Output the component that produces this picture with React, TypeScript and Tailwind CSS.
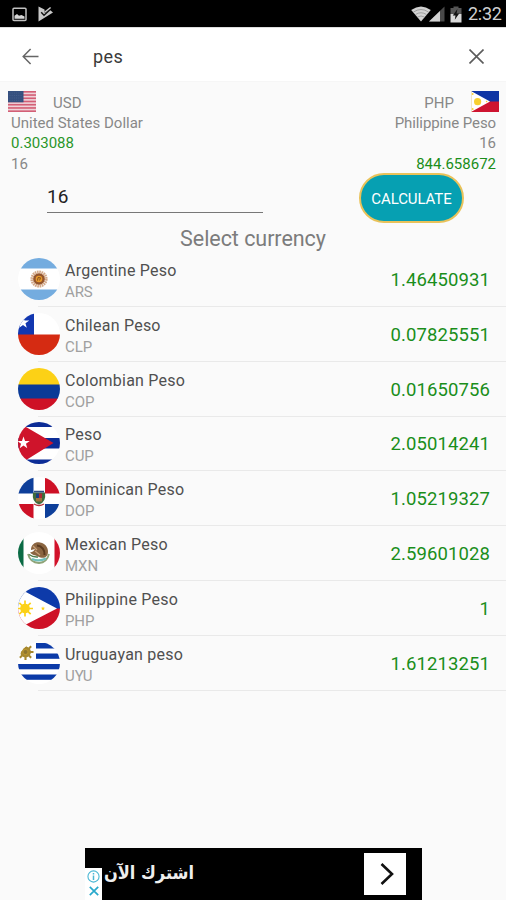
import type { ReactNode } from 'react';

interface Currency {
  code: string;
  name: string;
  rate: string;
  flag: ReactNode;
}

const RAYS = [0, 45, 90, 135, 180, 225, 270, 315];
const STAR = "M0,-5 L1.2,-1.6 L4.8,-1.5 L1.9,0.6 L2.9,4 L0,2 L-2.9,4 L-1.9,0.6 L-4.8,-1.5 L-1.2,-1.6 Z";

// Round flags, all drawn on a 42x42 box and clipped by FlagCircle
const CURRENCIES: Currency[] = [
  {
    code: "ARS",
    name: "Argentine Peso",
    rate: "1.46450931",
    flag: (
      <>
        <rect width="42" height="42" fill="#fff" />
        <rect width="42" height="10.5" fill="#74acdf" />
        <rect y="31.5" width="42" height="11" fill="#74acdf" />
        <g transform="translate(21 21)">
          <circle r="7" fill="none" stroke="#d3a888" strokeWidth="3.2" strokeDasharray="1.6 0.6" />
          <circle r="5.8" fill="#94552c" />
          <circle r="3.3" fill="#e89a2c" />
          <path d="M-1.5,1.6 L-1,-1.4 L1.5,-1.2 L0.6,1.4" fill="none" stroke="#70401c" strokeWidth="0.8" />
        </g>
      </>
    )
  },
  {
    code: "CLP",
    name: "Chilean Peso",
    rate: "0.07825551",
    flag: (
      <>
        <rect width="42" height="42" fill="#fff" />
        <rect width="16" height="22" fill="#1237b0" />
        <rect y="21.5" width="42" height="21" fill="#d52b12" />
        <path d={STAR} transform="translate(5 9.5) scale(1.3)" fill="#fff" />
      </>
    )
  },
  {
    code: "COP",
    name: "Colombian Peso",
    rate: "0.01650756",
    flag: (
      <>
        <rect width="42" height="17" fill="#fcd116" />
        <rect y="16.5" width="42" height="14.5" fill="#0a3a97" />
        <rect y="30.5" width="42" height="12" fill="#ce1126" />
      </>
    )
  },
  {
    code: "CUP",
    name: "Peso",
    rate: "2.05014241",
    flag: (
      <>
        <rect width="42" height="42" fill="#fff" />
        <rect width="42" height="5" fill="#0c2c96" />
        <rect y="16" width="42" height="10.5" fill="#0c2c96" />
        <rect y="37.5" width="42" height="5" fill="#0c2c96" />
        <path d="M0,0 L8,5 L35.5,21 L9,37.5 L0,42 Z" fill="#cf142b" />
        <path d={STAR} transform="translate(5.5 21) scale(1.3)" fill="#fff" />
      </>
    )
  },
  {
    code: "DOP",
    name: "Dominican Peso",
    rate: "1.05219327",
    flag: (
      <>
        <rect width="42" height="42" fill="#fff" />
        <rect width="15.5" height="16.5" fill="#0e3f9a" />
        <rect x="27" width="15" height="16.5" fill="#ce1126" />
        <rect y="27" width="15.5" height="15" fill="#ce1126" />
        <rect x="27" y="27" width="15" height="15" fill="#0e3f9a" />
        <path d="M15,15.5 Q13.5,25 21,27.5 Q28.5,25 27,15.5 Z" fill="#3f6b3c" />
        <rect x="18" y="16.5" width="3" height="4.5" fill="#173f80" />
        <rect x="21" y="16.5" width="3" height="4.5" fill="#b02a34" />
        <rect x="18" y="21" width="6" height="3.5" fill="#a0713c" />
        <path d="M16,13.8 H26 V15.4 H16 Z" fill="#2f4f84" />
        <path d="M16,27 Q21,30 26,27" fill="none" stroke="#b8353f" strokeWidth="1.3" />
      </>
    )
  },
  {
    code: "MXN",
    name: "Mexican Peso",
    rate: "2.59601028",
    flag: (
      <>
        <rect width="42" height="42" fill="#fff" />
        <rect width="5.5" height="42" fill="#0b6b45" />
        <rect x="36.5" width="6" height="42" fill="#d2132b" />
        <path d="M10,22 Q12,30.5 21,31 Q29,30.5 31,22" fill="none" stroke="#8fa478" strokeWidth="1.8" />
        <path d="M14,27 Q21,30 28,26.5" fill="none" stroke="#6fc0bb" strokeWidth="2.2" />
        <path d="M13,18 C13,12 18,9.5 22,10.5 C28,11.5 31.5,17 29.5,23 C27,27 23,26 20,24.5 C17,23 14,23 12,20.5 C15,20 16,19 17,17 Z" fill="#8a6541" />
        <path d="M19,13.5 C24,14 27,18 26.5,23" fill="none" stroke="#5a3b20" strokeWidth="2" />
        <path d="M15,14 L19,18 M17,19 L22,23" stroke="#c9a078" strokeWidth="1.3" />
        <path d="M11,22.5 Q15,25.5 20,25" fill="none" stroke="#4f7d4d" strokeWidth="1.4" />
      </>
    )
  },
  {
    code: "PHP",
    name: "Philippine Peso",
    rate: "1",
    flag: (
      <>
        <rect width="42" height="22" fill="#0d3aa9" />
        <rect y="21.5" width="42" height="21" fill="#ce1126" />
        <path d="M0,0 L6,4 L39,21.5 L7,38 L0,42 Z" fill="#fff" />
        <g transform="translate(7 21.5)" fill="#fcd116" stroke="#fcd116" strokeWidth="1.7">
          <circle r="4" />
          {RAYS.map(a => (
            <path key={a} d="M0,-3 V-8" transform={`rotate(${a})`} />
          ))}
        </g>
        <path d={STAR} transform="translate(25 21.5) scale(0.45)" fill="#fcd116" />
      </>
    )
  },
  {
    code: "UYU",
    name: "Uruguayan peso",
    rate: "1.61213251",
    flag: (
      <>
        <rect width="42" height="42" fill="#fff" />
        <rect x="18" y="1" width="24" height="5.5" fill="#0b3aa8" />
        <rect x="18" y="11.5" width="24" height="5.3" fill="#0b3aa8" />
        <rect y="22" width="42" height="5.3" fill="#0b3aa8" />
        <rect y="32.5" width="42" height="5.3" fill="#0b3aa8" />
        <g transform="translate(7.5 10)" stroke="#a8892e" strokeWidth="2.1" fill="#b8942e">
          <circle r="4.4" />
          {RAYS.map(a => (
            <path key={a} d="M0,-3 V-8" transform={`rotate(${a})`} />
          ))}
        </g>
        <circle cx="7.5" cy="10" r="2" fill="#8d752d" />
      </>
    )
  }
];

function FlagCircle({ children }: { children: ReactNode }) {
  return (
    <svg viewBox="0 0 42 42" className="size-[42px] rounded-full shrink-0">
      {children}
    </svg>
  );
}

function StatusBar() {
  return (
    <div className="h-[27px] shrink-0 bg-black flex items-center justify-between pl-3 pr-[5px]">
      <div className="flex items-center gap-[11px] mt-[1px]">
        <svg viewBox="0 0 15 15" className="w-[15px] h-[15px]">
          <rect x="1" y="1.2" width="13" height="12.4" rx="1" fill="none" stroke="#c0c0c0" strokeWidth="1.5" />
          <path d="M2.5,11.8 V8.8 L5,7 L7,8.8 L9.5,8 L12.5,9.5 V11.8 Z" fill="#d6d6d6" />
        </svg>
        <svg viewBox="0 0 15 16" className="w-[15px] h-[16px]">
          <path d="M0.5,0.5 L6.5,3.6 L6.8,7 L12,4 L15,6.5 L0.5,15.5 Z" fill="#c8c8c8" />
          <path d="M3.2,6.2 L6,9.2 L12,3.8" fill="none" stroke="#111" strokeWidth="1.4" />
          <path d="M7,6 L12.6,1.5" fill="none" stroke="#c8c8c8" strokeWidth="1.6" />
        </svg>
      </div>
      <div className="flex items-center mt-[1px]">
        <svg viewBox="0 0 20 16" className="w-[20px] h-[16px]">
          <path d="M0.2,4 Q10,-3 19.8,4 L10,15.5 Z" fill="#d2d2d2" />
          <path d="M2.5,6 Q10,1 17.5,6 M4.5,8.5 Q10,5 15.5,8.5 M6.5,11 Q10,9 13.5,11" fill="none" stroke="#888" strokeWidth="0.7" />
        </svg>
        <svg viewBox="0 0 16 16" className="w-[16px] h-[16px] -ml-[2px]">
          <path d="M0,15.5 L15.5,0.5 V15.5 Z" fill="#4a4a4a" />
          <path d="M0,15.5 L11,4.9 V15.5 Z" fill="#d2d2d2" />
        </svg>
        <svg viewBox="0 0 12 17" className="w-[12px] h-[17px] ml-[5px]">
          <path d="M3.5,0.5 H8.5 V2 H11.5 V8 H0.5 V2 H3.5 Z" fill="#555" />
          <rect x="0.5" y="8" width="11" height="8.5" fill="#d8d8d8" />
          <path d="M7.4,3 L2.8,9.4 H5.5 L4.8,13.8 L9.2,7.4 H6.6 Z" fill="#111" />
        </svg>
        <span className="text-[18px] leading-[20px] text-[#d0d0d0] ml-[6px] w-[33px] tracking-[-0.3px]">2:32</span>
      </div>
    </div>
  );
}

function SearchBar() {
  return (
    <div className="h-[55px] shrink-0 bg-white border-t border-[#dedede] border-b border-b-[#f6f6f6] flex items-center px-[22px]">
      <svg viewBox="0 0 17 17" className="w-[17px] h-[17px] mt-[4px]" fill="none" stroke="#666" strokeWidth="1.5">
        <path d="M16.5,8.5 H1.5 M8.6,1 L1.2,8.5 L8.6,16" />
      </svg>
      <span className="text-[18px] leading-[22px] text-[#3a3a3a] ml-[54px] mt-[4px] grow tracking-[0.4px]">pes</span>
      <svg viewBox="0 0 15 15" className="w-[15px] h-[15px] mt-[4px]" fill="none" stroke="#5c5c5c" strokeWidth="1.6">
        <path d="M0.5,0.5 L14.5,14.5 M14.5,0.5 L0.5,14.5" />
      </svg>
    </div>
  );
}

function UsFlag() {
  return (
    <svg viewBox="0 0 28 21" className="w-[28px] h-[21px]">
      <rect width="28" height="21" fill="#efd3d9" />
      {[0, 2, 4, 6, 8, 10, 12].map(i => (
        <rect key={i} y={i * 1.615} width="28" height="1.615" fill="#d35f76" />
      ))}
      <rect width="15.5" height="11.3" fill="#35507f" />
      <path d="M1.5,2 H14.5 M1.5,4.5 H14.5 M1.5,7 H14.5 M1.5,9.4 H14.5" stroke="#4d6690" strokeWidth="0.7" strokeDasharray="1 1.2" />
    </svg>
  );
}

function PhFlag() {
  return (
    <svg viewBox="0 0 28 21" className="w-[28px] h-[21px]">
      <rect width="28" height="11" fill="#0f35a4" />
      <rect y="10.5" width="28" height="10.5" fill="#ce1430" />
      <path d="M0,0 L19,10.5 L0,21 Z" fill="#fff" />
      <circle cx="6.6" cy="10.7" r="3.6" fill="#f8d030" />
      <path d="M0,0 V21" stroke="#e9dcae" strokeWidth="1.4" />
      <circle cx="1.7" cy="3" r="0.9" fill="#f8d030" />
      <circle cx="1.7" cy="18" r="0.9" fill="#f8d030" />
      <circle cx="15.6" cy="10.5" r="0.8" fill="#f8d030" />
    </svg>
  );
}

function CurrencyRow({ currency }: { currency: Currency }) {
  return (
    <div className="h-[54.85px] flex flex-col">
      <div className="grow flex items-center pl-[17.5px] pr-4">
        <FlagCircle>{currency.flag}</FlagCircle>
        <div className="ml-[5.5px] pt-[4px] grow flex flex-col">
          <span className="text-[16px] leading-[22px] tracking-[0.24px] text-[#505050]">{currency.name}</span>
          <span className="text-[15px] leading-[20px] tracking-[-0.1px] text-[#a0a0a0]">{currency.code}</span>
        </div>
        <span className="text-[18.5px] leading-[22px] tracking-[0.1px] text-[#1a8e1a] mt-[2px]">{currency.rate}</span>
      </div>
      <div className="h-px ml-[38px] bg-[#e9e9e9]" />
    </div>
  );
}

function AdBanner() {
  return (
    <div className="w-[337px] h-[52px] ml-[85px] mt-auto bg-black flex shrink-0">
      <div className="w-[17px] h-[32px] mt-[20px] bg-white flex flex-col items-center gap-[3px] pt-[2px] shrink-0">
        <svg viewBox="0 0 14 14" className="w-[13px] h-[13px]" fill="none" stroke="#4ab7d4" strokeWidth="1.2">
          <circle cx="7" cy="7" r="6" />
          <path d="M7,6 V10.8 M7,3.3 V4.8" strokeWidth="1.6" />
        </svg>
        <svg viewBox="0 0 10 10" className="w-[10px] h-[10px]" fill="none" stroke="#29a9cc" strokeWidth="1.7">
          <path d="M0.8,0.8 L9.2,9.2 M9.2,0.8 L0.8,9.2" />
        </svg>
      </div>
      <span dir="rtl" className="ml-[3px] mt-[10px] w-[89px] text-[18px] leading-[30px] font-bold text-[#eee] whitespace-nowrap font-['DejaVu_Sans_Condensed','DejaVu_Sans',sans-serif]">
        اشترك الآن
      </span>
      <div className="ml-auto mr-[16px] mt-[5px] w-[42px] h-[42px] bg-white flex items-center justify-center">
        <svg viewBox="0 0 14 22" className="w-[14px] h-[22px] ml-[3px]" fill="none" stroke="#111" strokeWidth="2.6">
          <path d="M1.5,1 L12,11 L1.5,21" />
        </svg>
      </div>
    </div>
  );
}

export default function App() {
  return (
    <div className="w-[506px] h-[900px] bg-[#fafafa] flex flex-col overflow-hidden font-[Roboto,sans-serif]">
      <StatusBar />
      <SearchBar />

      {/* From / to summary */}
      <div className="h-[91px] shrink-0 flex justify-between pl-2 pr-[7px] pt-[9px] text-[15px] leading-[20px] text-[#888]">
        <div className="flex flex-col">
          <div className="flex h-[22px]">
            <UsFlag />
            <span className="ml-[17px] mt-[2px]">USD</span>
          </div>
          <div className="pl-[3px] flex flex-col leading-[20.3px]">
            <span>United States Dollar</span>
            <span className="text-[#2a962a]">0.303088</span>
            <span>16</span>
          </div>
        </div>
        <div className="flex flex-col items-end">
          <div className="flex h-[22px]">
            <span className="mr-[17px] mt-[2px]">PHP</span>
            <PhFlag />
          </div>
          <div className="pr-[3px] flex flex-col items-end leading-[20.3px]">
            <span className="tracking-[-0.1px]">Philippine Peso</span>
            <span>16</span>
            <span className="text-[#1a8e1a]">844.658672</span>
          </div>
        </div>
      </div>

      {/* Amount */}
      <div className="h-[50px] shrink-0 flex items-start justify-between pl-[47px] pr-[42px]">
        <div className="w-[216px] h-[40px] border-b border-[#777] text-[19px] leading-[22px] pt-[13px] text-[#222]">16</div>
        <button className="w-[105px] h-[50px] rounded-full border-2 border-[#e9c25a] bg-[#06a0b2] text-white text-[15px] tracking-[-0.1px] pt-[2px]">
          CALCULATE
        </button>
      </div>

      <h1 className="h-[29px] shrink-0 text-center text-[21.5px] leading-[31px] tracking-[-0.05px] text-[#7c7c7c]">Select currency</h1>

      <div className="flex flex-col shrink-0">
        {CURRENCIES.map(currency => (
          <CurrencyRow key={currency.code} currency={currency} />
        ))}
      </div>

      <AdBanner />
    </div>
  );
}
